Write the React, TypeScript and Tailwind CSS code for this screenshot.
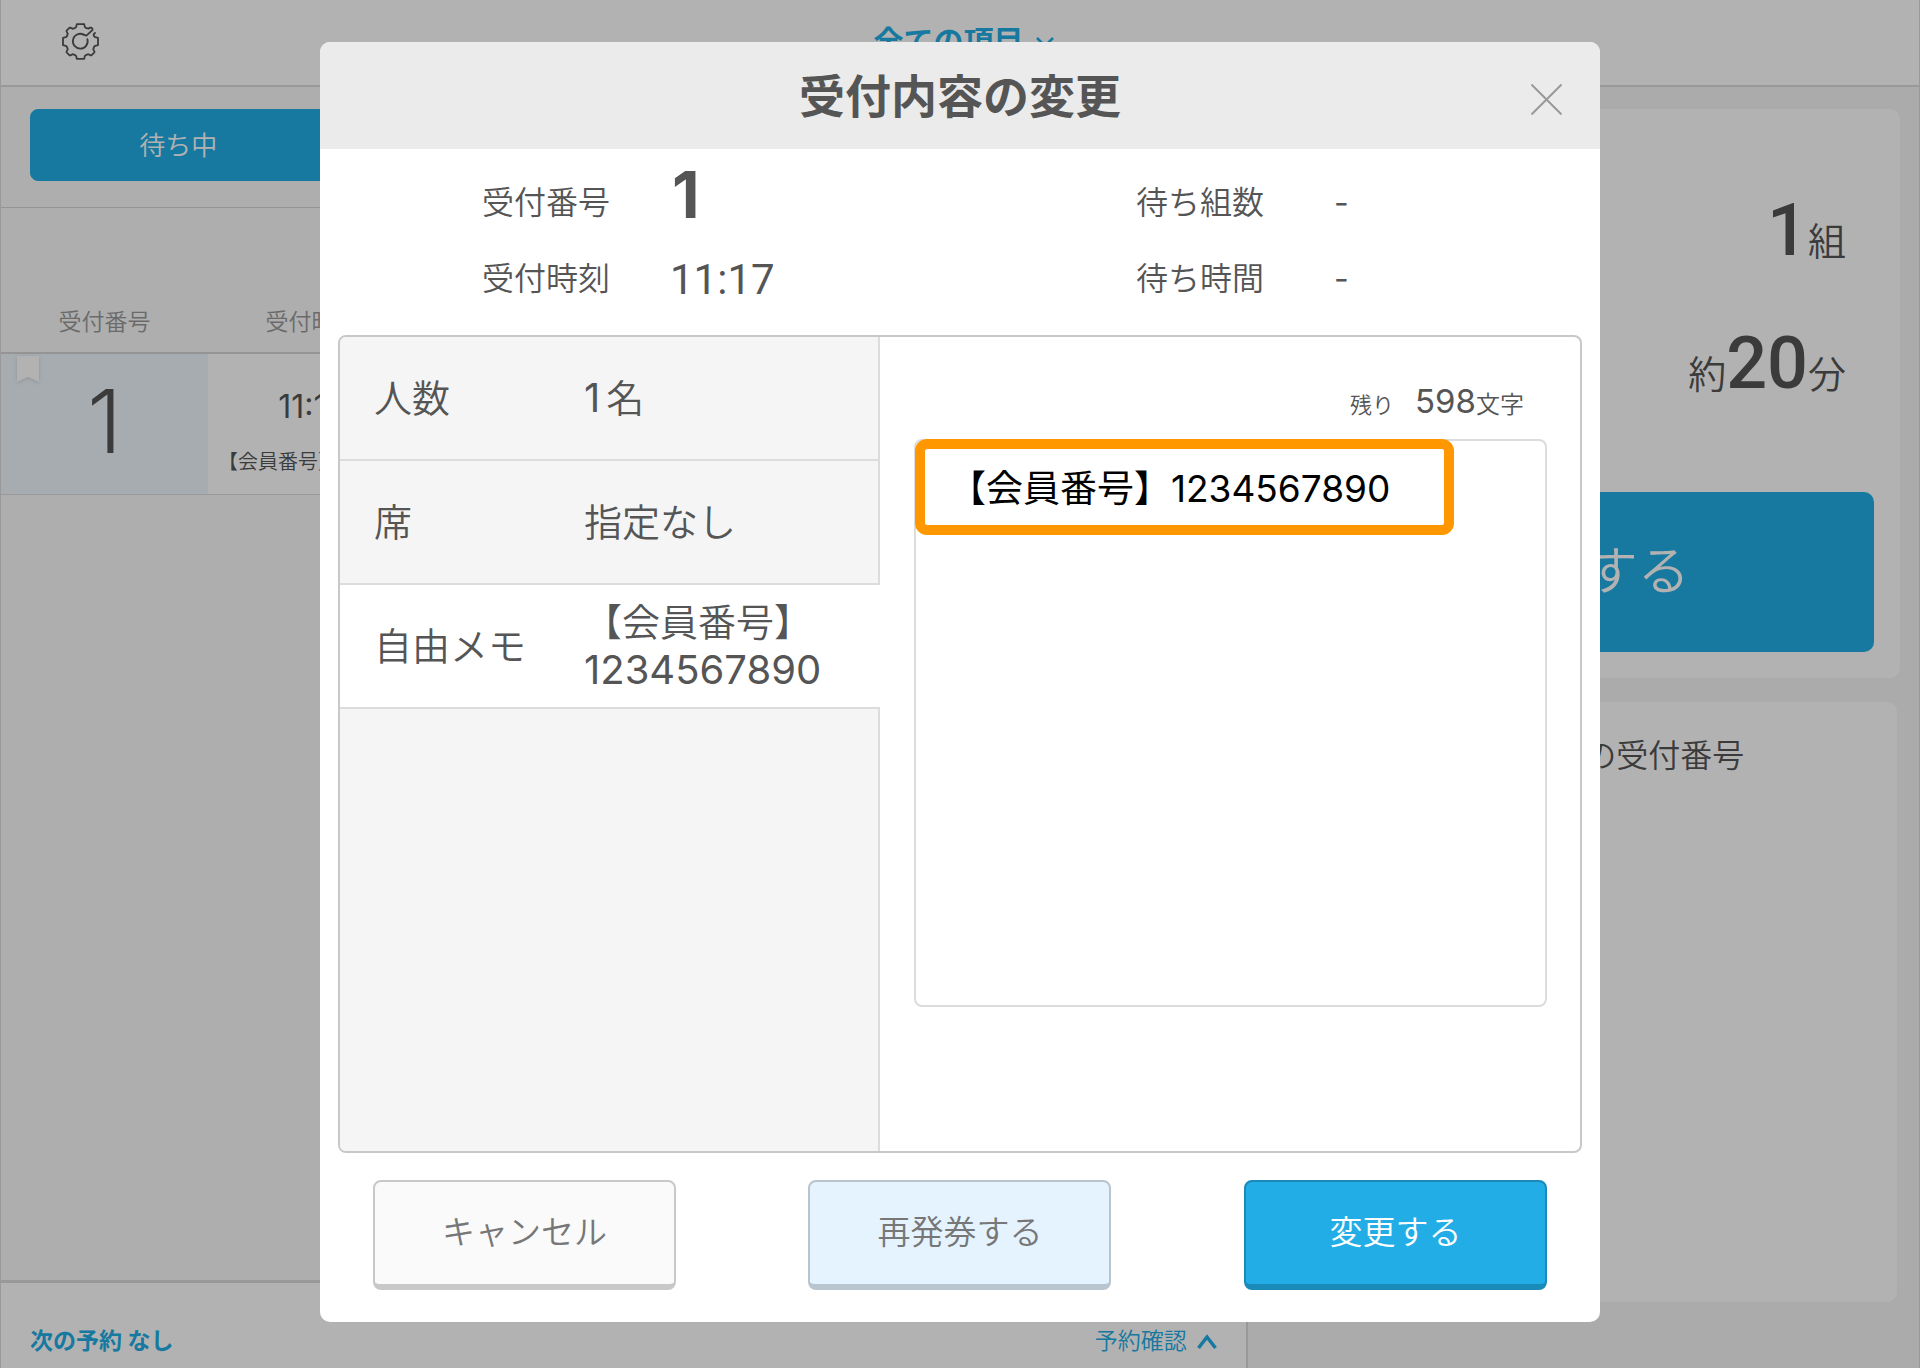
/**
 * Reception list with the "change reception details" dialog opened on top.
 */
import clsx from "clsx";
import { useState } from "react";
import type { ReactNode } from "react";

const TABS = ["待ち中", "案内済み", "キャンセル", "すべて"];

const MEMO = "【会員番号】1234567890";

type RowKey = "people" | "seat" | "memo";

const ROWS: { key: RowKey; label: string; value: ReactNode }[] = [
  {
    key: "people",
    label: "人数",
    value: (
      <>
        <span className="mr-[6px] text-[40px] font-[390]">1</span>名
      </>
    ),
  },
  { key: "seat", label: "席", value: "指定なし" },
  {
    key: "memo",
    label: "自由メモ",
    value: (
      <>
        【会員番号】
        <br />
        <span className="text-[40px] font-[390]">1234567890</span>
      </>
    ),
  },
];

function GearIcon() {
  return (
    <svg
      viewBox="0 0 37 37"
      className="size-[37px]"
      fill="none"
      stroke="currentColor"
      strokeWidth="1.8"
      strokeLinecap="round"
      strokeLinejoin="round"
      aria-hidden
    >
      <path d="M21.6 11.6 24.4 12.6 30.6 6.8Q30.8 5.4 29.2 4.6L28.2 4.6 26.4 5.6 23.8 4.8 22.8 3.8 22.2 1.2H14.8L14.2 3.8 13.2 4.8 10.6 5.8 8.4 4.6 7.6 4.6 4.6 7.6 4.6 8.6 5.8 10.6 4.8 13.4 3.8 14.2 1 14.8V22.2L3.8 22.8 4.8 23.6 5.8 26.4 4.6 28.4 4.6 29.4 7.6 32.4 8.4 32.4 10.6 31.2 13.2 32.2 14.2 33.2 14.8 35.8H22.2L22.8 33.2 23.8 32.2 26.4 31.2 28.6 32.4 29.4 32.4 32.4 29.4 32.4 28.4 31.2 26.4 32.2 23.6 33.2 22.8 36 22.2V14.8L33.2 14.2 32.2 13.4 31.6 11.4 33 10" />
      <path d="M21.6 11.6A7.4 7.4 0 1 0 25.4 16.2" />
    </svg>
  );
}

function Stat({ label, value }: { label: string; value: ReactNode }) {
  return (
    <div className="flex h-[76px] items-center">
      <dt className="w-[188px] text-[32px]">{label}</dt>
      <dd>{value}</dd>
    </div>
  );
}

function ReceptionList() {
  return (
    <section className="flex w-[65%] flex-col border-r-2 border-[#dcdcdc]">
      <div className="flex flex-1 flex-col bg-[#f9f9f9]">
        <div className="flex border-b border-[#d4d4d4] px-[29px] pt-[22px] pb-[26px]">
          {TABS.map((tab, i) => (
            <button
              key={tab}
              type="button"
              className={clsx(
                "h-[72px] flex-1 border border-[#22ade6] text-[26px]",
                i === 0 ? "rounded-l-lg bg-[#22ade6] text-white" : "bg-white text-[#22ade6]",
                i === TABS.length - 1 && "rounded-r-lg",
              )}
            >
              {tab}
            </button>
          ))}
        </div>

        <table className="w-full table-fixed border-collapse">
          <thead>
            <tr className="h-[145px] border-b-2 border-[#d4d4d4] align-bottom text-[23px] text-[#999]">
              <th className="w-[207px] pb-[13px] font-[350]">受付番号</th>
              <th className="w-[207px] pb-[13px] font-[350]">受付時刻</th>
              <th />
            </tr>
          </thead>
          <tbody>
            <tr className="h-[141px] border-b border-[#dcdcdc] bg-white">
              <td className="bg-[#eef7fd] p-0">
                <div className="relative flex h-[140px] justify-center pt-[23px]">
                  <svg
                    viewBox="0 0 22 26"
                    className="absolute top-[2px] left-[16px] h-[26px] w-[22px] drop-shadow"
                    aria-hidden
                  >
                    <path d="M0 0H22V26L11 21 0 26Z" fill="#fff" />
                  </svg>
                  <span className="text-[88px] leading-[88px]">1</span>
                </div>
              </td>
              <td className="p-0 text-center align-top whitespace-nowrap">
                <div className="flex h-[106px] items-center justify-center text-[32px] font-normal">
                  11:17
                </div>
                <div className="-mt-2 pl-[10px] text-left text-[20px] leading-5">{MEMO}</div>
              </td>
              <td />
            </tr>
          </tbody>
        </table>
      </div>

      <footer className="flex h-[88px] items-center justify-between border-t-3 border-[#dcdcdc] bg-white pt-[32px] pr-[29px] pl-[29px] text-[23px] text-[#22ade6]">
        <span className="font-bold">次の予約 なし</span>
        <button type="button" className="flex items-center gap-[10px]">
          予約確認
          <svg viewBox="0 0 20 16" className="w-5" fill="none" stroke="currentColor" strokeWidth="3.5" aria-hidden>
            <path d="M1.5 14 10 3 18.5 14" />
          </svg>
        </button>
      </footer>
    </section>
  );
}

function WaitingSummary() {
  return (
    <aside className="flex flex-1 flex-col gap-6 pt-[22px] pr-[19px] pb-[66px] pl-6">
      <div className="rounded-[10px] bg-white px-[26px] pt-[77px] pb-[26px]">
        <div className="flex flex-col items-end pr-[28px] text-[38px]">
          <p className="flex h-[133px] items-baseline">
            <span className="font-[Roboto] text-[72px] leading-[90px] font-medium">1</span>組
          </p>
          <p className="flex h-[173px] items-baseline">
            約<span className="font-[Roboto] text-[72px] leading-[90px] font-medium">20</span>分
          </p>
        </div>
        <button type="button" className="h-[160px] w-full rounded-[10px] bg-[#22ade6] text-[52px] text-white">
          受付する
        </button>
      </div>
      <div className="mr-[3px] flex-1 rounded-[10px] bg-white pt-[30px] text-center text-[32px]">
        呼び出し中の受付番号
      </div>
    </aside>
  );
}

function ChangeDialog() {
  const [active, setActive] = useState<RowKey>("memo");
  const [memo, setMemo] = useState(MEMO);

  return (
    <div
      role="dialog"
      aria-modal="true"
      aria-labelledby="dialog-title"
      className="w-2/3 overflow-hidden rounded-[10px] bg-white"
    >
      <header className="relative flex h-[107px] items-center justify-center bg-[#ebebeb]">
        <h1 id="dialog-title" className="text-[46px] leading-[60px] font-bold">
          受付内容の変更
        </h1>
        <button type="button" aria-label="閉じる" className="absolute top-[42px] right-[38px] text-[#999]">
          <svg viewBox="0 0 31 31" className="size-[31px]" stroke="currentColor" strokeWidth="2" aria-hidden>
            <path d="M0.5 0.5 30.5 30.5M30.5 0.5 0.5 30.5" />
          </svg>
        </button>
      </header>

      <dl className="grid grid-cols-[654fr_464fr] pt-[16px] pb-[18px] pl-[162px]">
        <Stat
          label="受付番号"
          value={<p className="h-[76px] pl-[2px] text-[64px] leading-[60px] font-bold">1</p>}
        />
        <Stat label="待ち組数" value={<span className="pl-[10px] text-[32px] font-normal">-</span>} />
        <Stat
          label="受付時刻"
          value={<span className="font-[Roboto] text-[42px] font-normal">11:17</span>}
        />
        <Stat label="待ち時間" value={<span className="pl-[10px] text-[32px] font-normal">-</span>} />
      </dl>

      <div className="mx-[18px] flex overflow-hidden rounded-lg border-2 border-[#c8c8c8]">
        <div className="flex w-[540px] flex-col">
          {ROWS.map((row) => (
            <button
              key={row.key}
              type="button"
              onClick={() => setActive(row.key)}
              className={clsx(
                "flex h-[124px] items-center border-b-2 border-[#dcdcdc] pl-[34px] text-left text-[38px] leading-[48px]",
                active === row.key ? "bg-white" : "border-r-2 bg-[#f5f5f5]",
              )}
            >
              <span className="w-[210px]">{row.label}</span>
              <span>{row.value}</span>
            </button>
          ))}
          <div className="flex-1 border-r-2 border-[#dcdcdc] bg-[#f5f5f5]" />
        </div>

        <div className="flex-1 pt-[40px] pr-[33px] pb-[144px] pl-[34px]">
          <div className="flex h-[62px] items-baseline justify-end pr-[23px] text-[24px]">
            <label htmlFor="memo" className="mr-[21px] text-[22px]">
              残り
            </label>
            <span className="text-[33px] font-[390]">598</span>文字
          </div>
          <div className="relative">
            <textarea
              id="memo"
              value={memo}
              onChange={(e) => setMemo(e.target.value)}
              className="block h-[568px] w-full resize-none rounded-lg border-2 border-[#dcdcdc] px-[33px] py-[25px] text-[37px] leading-[46px] font-[390] text-black outline-none"
            />
            <div className="pointer-events-none absolute top-0 left-px h-24 w-[539px] rounded-xl border-10 border-[#ff9800]" />
          </div>
        </div>
      </div>

      <div className="flex justify-between px-[53px] pt-[27px] pb-[32px] text-[33px]">
        <button
          type="button"
          className="h-[110px] w-[303px] rounded-lg border-2 border-b-6 border-[#c8c8c8] bg-[#fafafa] text-[#777]"
        >
          キャンセル
        </button>
        <button
          type="button"
          className="h-[110px] w-[303px] rounded-lg border-2 border-b-6 border-[#b8c4ce] bg-[#e5f3ff] text-[#777]"
        >
          再発券する
        </button>
        <button
          type="button"
          className="h-[110px] w-[303px] rounded-lg border-2 border-b-6 border-[#1a8ab8] bg-[#22ade6] text-white"
        >
          変更する
        </button>
      </div>
    </div>
  );
}

export default function App() {
  return (
    <div className="font-['Inter','Noto_Sans_CJK_JP',sans-serif] font-[350] text-[#555]">
      <div className="flex min-h-screen flex-col border-x border-[#dcdcdc] bg-[#f5f5f5]">
        <header className="grid grid-cols-3 items-center border-b-2 border-[#dcdcdc] bg-white pt-[19px] pb-[21px]">
          <button type="button" aria-label="設定" className="ml-[61px] w-fit">
            <GearIcon />
          </button>
          <button
            type="button"
            className="flex items-center justify-center gap-[13px] pl-2 text-[30px] leading-[45px] font-bold text-[#22ade6]"
          >
            全ての項目
            <svg viewBox="0 0 18 10" className="w-[18px]" fill="none" stroke="currentColor" strokeWidth="2.5" aria-hidden>
              <path d="M1 1 9 9 17 1" />
            </svg>
          </button>
        </header>
        <div className="flex flex-1">
          <ReceptionList />
          <WaitingSummary />
        </div>
      </div>

      <div className="absolute inset-x-0 top-0 flex min-h-screen items-start justify-center bg-black/30 py-[42px]">
        <ChangeDialog />
      </div>
    </div>
  );
}
